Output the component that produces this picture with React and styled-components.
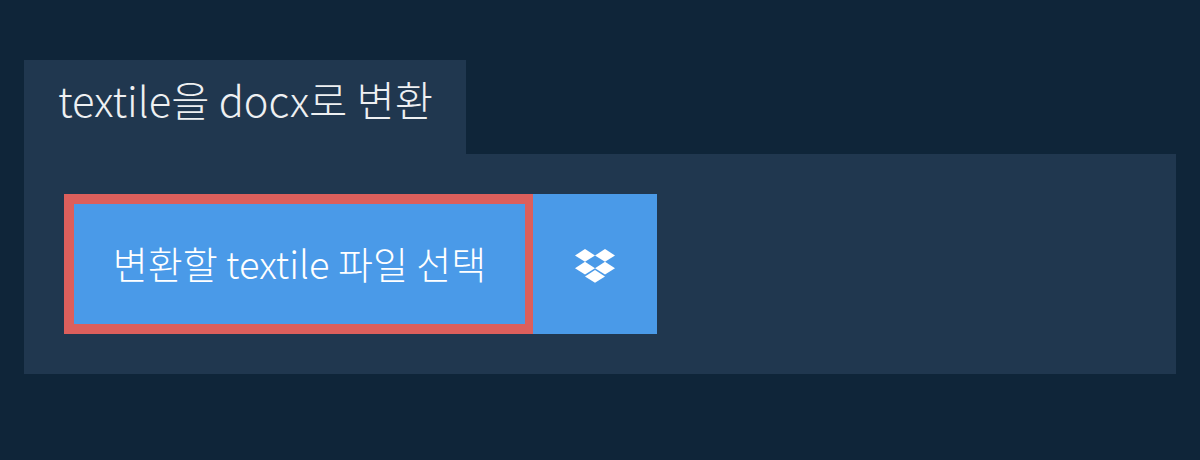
import React from "react";
import styled, { createGlobalStyle } from "styled-components";

const GlobalStyle = createGlobalStyle`
  html, body {
    margin: 0;
    padding: 0;
    background: #0f2539;
  }
  body {
    font-family: "Noto Sans CJK KR", sans-serif;
    font-weight: 300;
  }
`;

const Page = styled.div`
  width: 1200px;
  height: 460px;
  padding: 60px 24px 0;
  box-sizing: border-box;
  overflow: hidden;
`;

const Tab = styled.h1`
  display: inline-block;
  vertical-align: top;
  margin: 0;
  height: 94px;
  padding: 0 33px 0 34px;
  box-sizing: border-box;
  background: #20374f;
  color: #eef0f2;
  font-size: 41.6px;
  font-weight: 300;
  line-height: 78px;
  white-space: nowrap;
`;

const Panel = styled.div`
  display: flex;
  height: 220px;
  padding: 40px;
  box-sizing: border-box;
  background: #20374f;
`;

const PickButton = styled.button`
  width: 469px;
  height: 140px;
  padding: 0 0 4px;
  box-sizing: border-box;
  border: 10px solid #dc5f5c;
  border-right-width: 8px;
  background: #4a9ae8;
  color: #fff;
  font-family: inherit;
  font-size: 38px;
  font-weight: 300;
  white-space: nowrap;
`;

const DropboxButton = styled.button`
  display: flex;
  align-items: center;
  justify-content: center;
  width: 124px;
  height: 140px;
  padding: 4px 0 0;
  box-sizing: border-box;
  border: 0;
  background: #4a9ae8;
  color: #fff;
`;

const DropboxIcon = () => (
  <svg width="40" height="34" viewBox="0 0 40 34" fill="currentColor">
    <path d="M10 0 20 6.4 10 12.8 0 6.4Z" />
    <path d="M30 0 40 6.4 30 12.8 20 6.4Z" />
    <path d="M10 12.8 20 19.2 10 25.6 0 19.2Z" />
    <path d="M30 12.8 40 19.2 30 25.6 20 19.2Z" />
    <path d="M20 21 30 27.4 20 33.8 10 27.4Z" />
  </svg>
);

export default function App() {
  return (
    <>
      <GlobalStyle />
      <Page>
        <Tab>textile을 docx로 변환</Tab>
        <Panel>
          <PickButton>변환할 textile 파일 선택</PickButton>
          <DropboxButton aria-label="Dropbox">
            <DropboxIcon />
          </DropboxButton>
        </Panel>
      </Page>
    </>
  );
}
